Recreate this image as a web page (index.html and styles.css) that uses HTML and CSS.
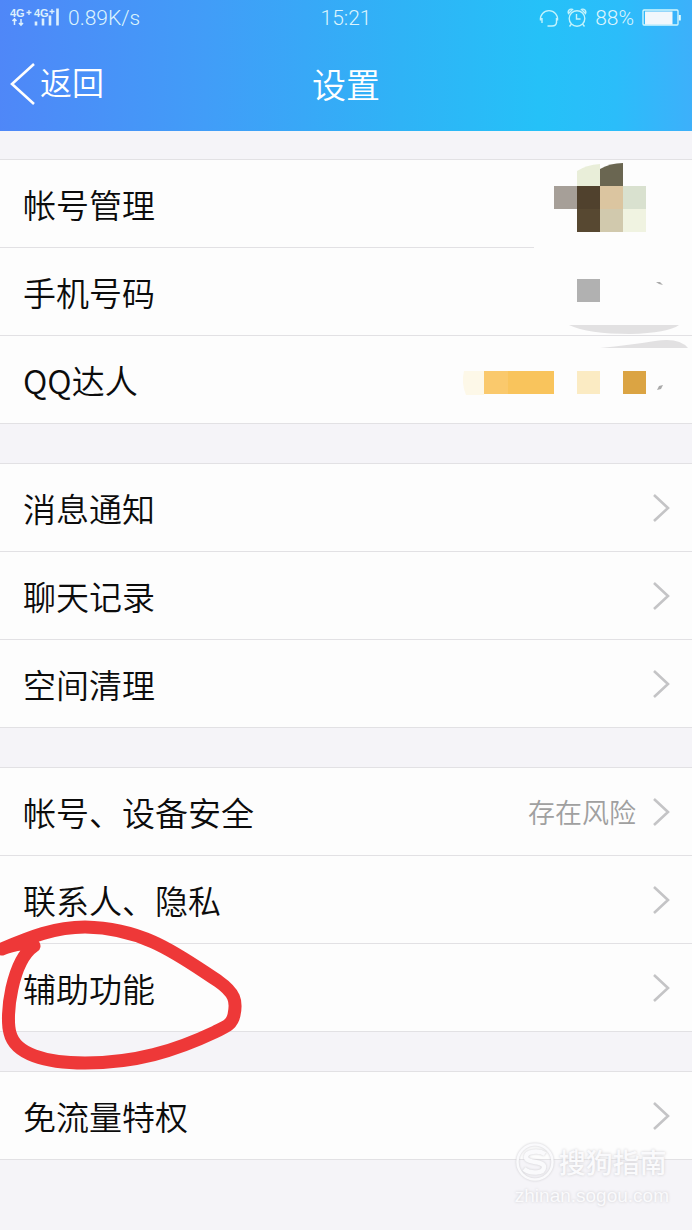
FILE: index.html
```html
<!DOCTYPE html>
<html lang="zh-CN">
<head>
<meta charset="utf-8">
<meta name="viewport" content="width=device-width, initial-scale=1">
<title>设置</title>
<link rel="stylesheet" href="styles.css">
</head>
<body>
<svg class="defs" aria-hidden="true">
  <symbol id="chevron" viewBox="0 0 18 30"><path d="M2 2 L16 15 L2 28" fill="none" stroke="#c4c4c6" stroke-width="2.6"/></symbol>
</svg>
<header class="header">
  <div class="status">
    <div class="status-left">
      <svg class="signal" viewBox="0 0 50 20" aria-hidden="true">
        <g class="signal-text">
          <text x="0" y="9">4G</text><text x="24" y="9">4G</text>
        </g>
        <path d="M16.500 4.500h5M19 2v5M39.500 3.500h5M42 1v5" stroke-width="1.300"/>
        <path d="M4.500 17v-6M2.500 13l2-2.200l2 2.200M11 11v6M9 15l2 2.200l2-2.200" stroke-width="1.500"/>
        <path d="M26 17.500v-4M33 17.500v-7M40 17.500v-10M47.500 17.500v-17" stroke-width="2.600"/>
      </svg>
      <span>0.89K/s</span>
    </div>
    <span class="clock">15:21</span>
    <div class="status-right">
      <svg class="glyph" viewBox="0 0 20 20" aria-hidden="true"><path d="M1.500 12.500A8.600 8.600 0 1 1 18.500 12.500M3 10v5M17.500 10v5M17.500 14c0 3-2 4-4.500 4H8.500" /></svg>
      <svg class="glyph" viewBox="0 0 20 20" aria-hidden="true"><circle cx="10" cy="10.500" r="7.800"/><path d="M9.500 6v5h4M4.500 16l-2 2.500M15.500 16l2 2.500"/><path d="M1.500 5.500a3 3 0 0 1 4-4zM18.500 5.500a3 3 0 0 0-4-4z"/></svg>
      <span class="percent">88%</span>
      <svg class="battery" viewBox="0 0 40 18" aria-hidden="true"><rect x="1" y="1" width="35" height="15" rx="1" fill="none" stroke="#d4f7fd" stroke-width="1.300"/><rect x="3" y="2.500" width="27.500" height="13" fill="#f1f7fc"/><path d="M37.800 6v5.500" stroke="#e4fafd" stroke-width="2"/></svg>
    </div>
  </div>
  <nav class="bar">
    <button class="back" type="button">
      <svg class="back-icon" viewBox="0 0 26 44" aria-hidden="true"><path d="M24 2 L2 22 L24 42" fill="none" stroke="#fff" stroke-width="2.600"/></svg>
      <span>返回</span>
    </button>
    <h1 class="title">设置</h1>
  </nav>
</header>
<main class="content">
  <section class="group">
    <a class="row" href="#account">帐号管理</a>
    <a class="row" href="#phone">手机号码</a>
    <a class="row" href="#talent">QQ达人</a>
    <svg class="mosaic" viewBox="0 0 242 265" aria-hidden="true">
      <rect x="84" y="2" width="122" height="100" fill="#fdfdfd"/>
      <rect x="84" y="84" width="158" height="8" fill="#fdfdfd"/>
      <path d="M127 12 Q136 6 150 5 V28 H127Z" fill="#e9eed9"/>
      <path d="M150 10 Q160 4 173 4 V28 H150Z" fill="#6a6651"/>
      <path d="M104 27h23v23h-23z" fill="#a69f98"/>
      <path d="M127 27h23v23h-23z" fill="#50412d"/>
      <path d="M150 27h23v23h-23z" fill="#dbc5a0"/>
      <path d="M173 27h23v23h-23z" fill="#d9e1cf"/>
      <path d="M127 50h23v23h-23z" fill="#574831"/>
      <path d="M150 50h23v23h-23z" fill="#d1c9ad"/>
      <path d="M173 50h23v23h-23z" fill="#f0f3e1"/>
      <path d="M127 120h23v23h-23z" fill="#b1b1b1"/>
      <path d="M206 123l4 0l3 3l-4-1z" fill="#aaa"/>
      <path d="M119 166H229Q218 174 180 175Q138 175 119 166Z" fill="#e2e1e2"/>
      <path d="M150 189Q180 186 205 182Q229 178 238 189Z" fill="#e2e1e2"/>
      <path d="M14 212H34V236H16Q11 224 14 212Z" fill="#fdf8e8"/>
      <path d="M34 212h24v23H34z" fill="#fac96c"/>
      <path d="M58 212h46v23H58z" fill="#f9c45c"/>
      <path d="M127 212h23v23h-23z" fill="#fbebc3"/>
      <path d="M173 212h23v23h-23z" fill="#dba443"/>
      <path d="M207 231l2-4l4-1l-2 4z" fill="#aaa"/>
    </svg>
  </section>
  <section class="group">
    <a class="row" href="#notify">消息通知<svg class="chevron"><use href="#chevron"/></svg></a>
    <a class="row" href="#history">聊天记录<svg class="chevron"><use href="#chevron"/></svg></a>
    <a class="row" href="#storage">空间清理<svg class="chevron"><use href="#chevron"/></svg></a>
  </section>
  <section class="group">
    <a class="row" href="#security">帐号、设备安全<span class="value">存在风险</span><svg class="chevron"><use href="#chevron"/></svg></a>
    <a class="row" href="#privacy">联系人、隐私<svg class="chevron"><use href="#chevron"/></svg></a>
    <a class="row" href="#assist">辅助功能<svg class="chevron"><use href="#chevron"/></svg></a>
    <svg class="circle-mark" viewBox="0 0 250 160" aria-hidden="true"><path d="M2 36C30 24 55 14 85 14C145 15 180 43 218 68C235 80 237 88 234 102C232 112 225 114 215 119C175 138 135 150 85 150C45 150 15 141 10 120C5 103 12 48 34 33M2 36C16 31 28 29 33 33" fill="none" stroke="#ee3838" stroke-width="13" stroke-linecap="round" stroke-linejoin="round"/></svg>
  </section>
  <section class="group">
    <a class="row" href="#data">免流量特权<svg class="chevron"><use href="#chevron"/></svg></a>
  </section>
  <div class="watermark">
    <div class="brand">
      <svg class="brand-logo" viewBox="0 0 40 40" aria-hidden="true"><circle cx="20" cy="20" r="17.500"/><path d="M30 12C24 8 11 9 11 15C11 22 29 18 29 25C29 32 15 32 9 27" stroke-width="4.500"/></svg>
      <span>搜狗指南</span>
    </div>
    <span class="site">zhinan.sogou.com</span>
  </div>
</main>
</body>
</html>
```
FILE: styles.css
```css
* {
  box-sizing: border-box;
}

body {
  margin: 0;
  min-height: 100vh;
  display: flex;
  flex-direction: column;
  background: #f5f4f8;
  color: #0c0c0c;
  font-family: "Noto Sans CJK SC", sans-serif;
}

.defs {
  position: absolute;
  width: 0;
  height: 0;
}

.header {
  height: 131px;
  padding: 0 10px;
  background: linear-gradient(91deg, #4f87f8 0%, #419df8 30%, #2fb3f6 58%, #25c1f8 78%, #2bbdfa 89%, #3db0fa 100%);
  color: #fff;
  font-family: Roboto, "Noto Sans CJK SC", sans-serif;
}

.status {
  display: grid;
  grid-template-columns: 1fr auto 1fr;
  align-items: center;
  height: 36px;
  font-size: 21px;
  font-weight: 300;
  color: #dcf4fd;
}

.status-left,
.status-right {
  display: flex;
  align-items: center;
  gap: 8px;
}

.status-right {
  justify-content: flex-end;
}

.signal {
  width: 50px;
  height: 20px;
  fill: none;
  stroke: #dcf0fd;
}

.signal-text {
  font: 700 11px "Liberation Sans", sans-serif;
  fill: #dcf0fd;
  stroke: none;
}

.glyph {
  width: 20px;
  height: 20px;
  fill: none;
  stroke: #c3f3fc;
  stroke-width: 1.4;
}

.battery {
  width: 40px;
  height: 18px;
}

.bar {
  display: grid;
  grid-template-columns: 1fr auto 1fr;
  align-items: center;
  height: 95px;
}

.back {
  display: flex;
  align-items: center;
  justify-self: start;
  gap: 4px;
  padding: 0;
  border: 0;
  background: none;
  color: inherit;
  font: inherit;
  font-size: 32px;
  font-weight: 350;
  line-height: 44px;
}

.back-icon {
  width: 26px;
  height: 44px;
}

.title {
  margin: 0;
  font-size: 34px;
  font-weight: 350;
}

.content {
  position: relative;
  flex: 1;
  display: flex;
  flex-direction: column;
  gap: 39px;
  padding: 28px 0 70px;
}

.group {
  position: relative;
  border-top: 1px solid #e2e1e4;
}

.row {
  display: flex;
  align-items: center;
  gap: 16px;
  height: 88px;
  padding: 0 22px 0 23px;
  border-bottom: 1px solid #e2e1e4;
  background: #fdfdfd;
  color: inherit;
  font-size: 33px;
  font-weight: 350;
  text-decoration: none;
}

.value {
  margin-left: auto;
  color: #a0a0a0;
  font-size: 27px;
}

.chevron {
  width: 18px;
  height: 30px;
  margin-left: auto;
}

.value + .chevron {
  margin-left: 0;
}

.mosaic {
  position: absolute;
  top: -1px;
  right: 0;
  width: 242px;
  height: 265px;
}

.circle-mark {
  position: absolute;
  bottom: -41px;
  left: 0;
  z-index: 1;
  width: 250px;
  height: 160px;
}

.watermark {
  position: absolute;
  right: 23px;
  bottom: 20px;
  display: flex;
  flex-direction: column;
  color: #fafafc;
  text-shadow: 0 0 3px #cbcace;
}

.brand {
  display: flex;
  align-items: center;
  gap: 4px;
  font-size: 27px;
  font-weight: 500;
  line-height: 40px;
}

.brand-logo {
  width: 40px;
  height: 40px;
  fill: none;
  stroke: #fafafc;
  stroke-width: 2.5;
  filter: drop-shadow(0 0 1px #cbcace);
}

.site {
  font-family: "Liberation Sans", sans-serif;
  font-size: 19px;
  line-height: 28px;
}
```
